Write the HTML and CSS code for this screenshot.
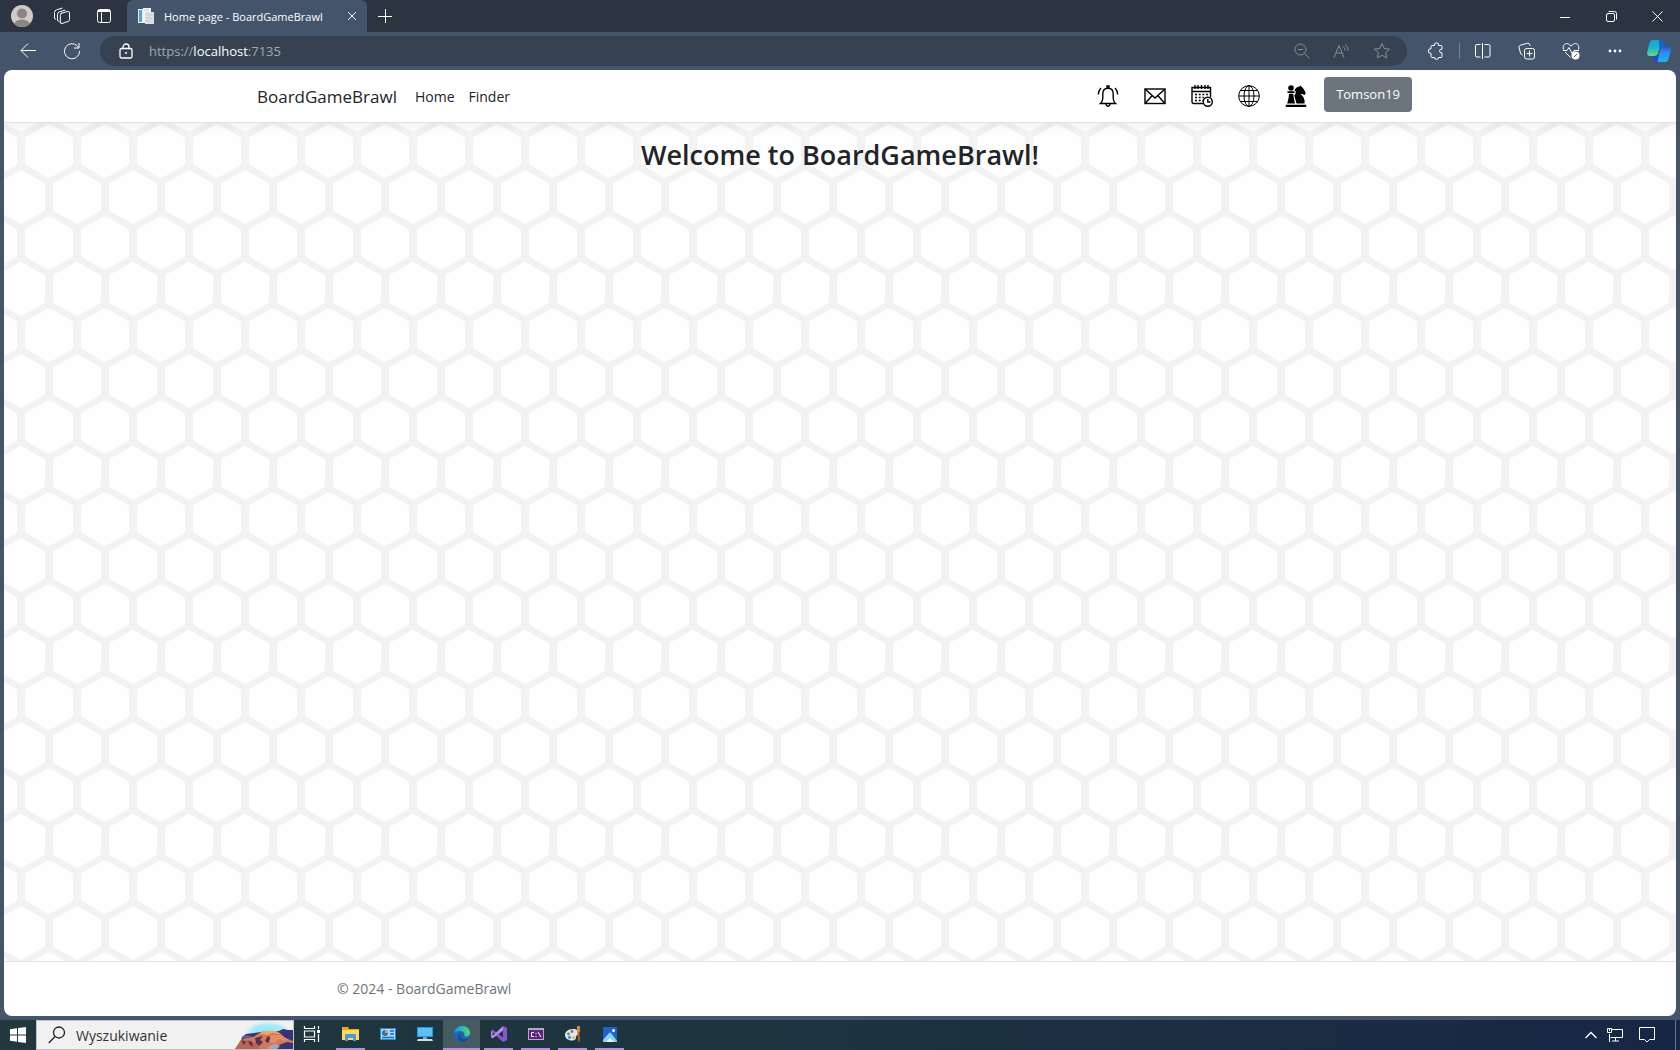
FILE: index.html
```html
<!DOCTYPE html>
<html lang="en">
<head>
<meta charset="utf-8">
<title>Home page - BoardGameBrawl</title>
<link rel="stylesheet" href="styles.css">
</head>
<body>
<div class="titlebar">
  <button class="tool w44" aria-label="Profile"><svg width="22" height="22" viewBox="0 0 22 22"><defs><clipPath id="av"><circle cx="11" cy="11" r="11"/></clipPath></defs><g clip-path="url(#av)"><rect width="22" height="22" fill="#cfccc8"/><circle cx="11" cy="8.500" r="5" fill="#8b8580"/><ellipse cx="11" cy="20" rx="8" ry="5.500" fill="#8b8580"/></g></svg></button>
  <button class="tool w36" aria-label="Workspaces"><svg class="line" width="18" height="18" viewBox="0 0 18 18"><path d="M7.500 6.500 14.500 4.500Q16.500 4.200 16.500 6V12.500Q16.500 14 15 14.500L9 16.500Q7.300 16.800 7.300 15V8.500Q7.300 6.800 9 6.200M4.500 13.500V7.500Q4.500 5.500 6.500 4.800L12.500 3M1.500 11.500V5.500Q1.500 3.500 3.500 2.800L9.500 1M3 12.500 1.500 11.500M6.500 14.700 4.500 13.500"/></svg></button>
  <button class="tool w47" aria-label="Tab actions"><svg class="line" width="16" height="16" viewBox="0 0 16 16"><rect x="1.500" y="1.500" width="13" height="13" rx="2"/><path d="M2 3h12" stroke-width="2"/><path d="M5.500 4.500v10"/></svg></button>
  <div class="tab">
    <svg width="16" height="16" viewBox="0 0 16 16"><path d="M0 1h8v14H0z" fill="#e8f0f4"/><path d="M1 2h3v12H1z" fill="#4fa3d8"/><path d="M5 0h8v13H5z" fill="#f4f4f2"/><path d="M7 4h9v12H7z" fill="#dde0e2"/><path d="M8 7h7M8 10h7M8 13h5" stroke="#c3cad0"/><path d="M6 2h5" stroke="#c9ced2"/></svg>
    <span class="tab-name">Home page - BoardGameBrawl</span>
    <button class="tool close" aria-label="Close tab"><svg class="line" width="10" height="10" viewBox="0 0 10 10"><path d="M1 1l8 8M9 1l-8 8"/></svg></button>
  </div>
  <button class="tool w36" aria-label="New tab"><svg class="line" width="14" height="14" viewBox="0 0 14 14"><path d="M7.500 0v14M0 7.500h14"/></svg></button>
  <div class="window-buttons">
    <button class="tool w46" aria-label="Minimize"><svg class="line" width="11" height="11" viewBox="0 0 11 11"><path d="M0 6.500h10"/></svg></button>
    <button class="tool w46" aria-label="Restore"><svg class="line" width="11" height="11" viewBox="0 0 11 11"><rect x=".5" y="2.500" width="8" height="8" rx="1.500"/><path d="M2.500 .5H8.500Q10.500 .5 10.500 2.500V8.500"/></svg></button>
    <button class="tool w46" aria-label="Close"><svg class="line" width="11" height="11" viewBox="0 0 11 11"><path d="M.5 .5l10 10M10.500 .5l-10 10"/></svg></button>
  </div>
</div>

<div class="toolbar">
  <button class="tool w44" aria-label="Back"><svg class="line" width="16" height="16" viewBox="0 0 16 16"><path d="M16 7.500H1M8 .5 1 7.500l7 7"/></svg></button>
  <button class="tool w44" aria-label="Refresh"><svg class="line" width="18" height="18" viewBox="0 0 18 18"><path d="M15.500 5.500A7.500 7.500 0 1 0 16.500 9M16 1v5h-5"/></svg></button>
  <div class="address">
    <button class="tool lock" aria-label="Site information"><svg class="line" width="14" height="16" viewBox="0 0 14 16"><rect x="1" y="5.500" width="12" height="9.500" rx="1.500" stroke-width="1.300"/><path d="M4 5.500V4a3 3 0 0 1 6 0v1.500" stroke-width="1.300"/><circle cx="7" cy="10" r="1" fill="#fff" stroke="none"/></svg></button>
    <div class="url" role="textbox" aria-label="Address" contenteditable="true" spellcheck="false">https://<b>localhost</b>:7135</div>
    <button class="tool dim w40" aria-label="Zoom"><svg class="line" width="16" height="16" viewBox="0 0 16 16"><circle cx="6.500" cy="6.500" r="5.500"/><path d="M10.500 10.500l5 5M4 6.500h5"/></svg></button>
    <button class="tool dim w40" aria-label="Read aloud"><svg class="line" width="18" height="16" viewBox="0 0 18 16"><path d="M1 14.500 6 2.500l5 12M3 10h6M10 3.500q2 1.300 2 4M12 1.500q3.500 2 3.200 6"/></svg></button>
    <button class="tool dim w40" aria-label="Add to favorites"><svg class="line" width="18" height="18" viewBox="0 0 18 18"><path d="M9 1.500l2.300 5 5.200.6-3.900 3.600 1.100 5.300L9 13.300 4.300 16l1.100-5.300L1.500 7.100l5.200-.6z"/></svg></button>
  </div>
  <button class="tool w44" aria-label="Extensions"><svg class="line" width="18" height="18" viewBox="0 0 18 18"><path d="M5 3.500h2.500Q7 .8 9.500 .8t2 2.700h2.500q1 0 1 1v2.700q-2.500-.3-2.500 1.800T15 10.800v3.700q0 1-1 1h-2.500q.4 1.800-2 1.800t-2-1.800H5q-1 0-1-1v-3.200Q1.300 11.500 1.300 9T4 6.800V4.500q0-1 1-1z"/></svg></button>
  <span class="divider"></span>
  <button class="tool w44" aria-label="Split screen"><svg class="line" width="18" height="16" viewBox="0 0 18 16"><path d="M6.500 1.500H3q-1.500 0-1.500 1.500v9.500q0 1.500 1.500 1.500h3.500M10.500 1.500H14.500q1.500 0 1.500 1.500v9.500q0 1.500-1.500 1.500h-4M8.500 0v16"/></svg></button>
  <button class="tool w44" aria-label="Collections"><svg class="line" width="18" height="18" viewBox="0 0 18 18"><rect x="6.500" y="6.500" width="10" height="10.500" rx="2"/><path d="M11.500 8.500v6M8.500 11.500h6M4.500 13Q3 12.500 2.500 11L1 5.500Q.7 3.700 2.500 3.200L9.500 1.200Q11.500 1 12 3v1"/></svg></button>
  <button class="tool w44" aria-label="Browser essentials"><svg class="line" width="18" height="18" viewBox="0 0 18 18"><path d="M1.500 7.500C0 3 4 .5 6.500 2L9 4l2.500-2c3-1.500 6.500 1 5 5.500M3 10l5.500 5.500M1 8.500h4l2-3 3 6 2-3h5"/><circle cx="13.500" cy="13.500" r="4" fill="#fff" stroke="none"/><path d="M12 15l3-3" stroke="#445469"/></svg></button>
  <button class="tool w44" aria-label="More"><svg width="14" height="4" viewBox="0 0 14 4" fill="#fff"><circle cx="2" cy="2" r="1.400"/><circle cx="7" cy="2" r="1.400"/><circle cx="12" cy="2" r="1.400"/></svg></button>
  <button class="tool copilot" aria-label="Copilot"><svg width="24" height="22" viewBox="0 0 24 22"><defs><linearGradient id="cp1" x1="0" y1="0" x2="0" y2="1"><stop offset="0" stop-color="#1b9be0"/><stop offset=".5" stop-color="#19b9c4"/><stop offset="1" stop-color="#63d98a"/></linearGradient><linearGradient id="cp2" x1="0" y1="0" x2="0" y2="1"><stop offset="0" stop-color="#2254c9"/><stop offset=".4" stop-color="#3088f0"/><stop offset="1" stop-color="#18b8f4"/></linearGradient></defs><path d="M6 0h7q2 0 1.500 2L11 13q-1 3-4 3H3Q-.5 16 .3 12L2.500 3Q3.300 0 6 0z" fill="url(#cp1)"/><path d="M12 0h2.500q2 0 2.700 3l.8 3H15q-2 0-2.700 2z" fill="#1565c4"/><path d="M15.500 6H21q3.500 0 2.800 4L21.500 19q-.8 3-3.500 3h-6q-2 0-1.500-2L13.500 9q.6-3 2-3z" fill="url(#cp2)"/><path d="M6 16h3q2 0 3-2l-1.700 8Q8 22 7.200 19z" fill="#2446d8"/></svg></button>
</div>

<div class="frame">
  <div class="page">
    <header class="site-header">
      <nav class="container nav">
        <a class="brand" href="#">BoardGameBrawl</a>
        <a class="nav-link" href="#">Home</a>
        <a class="nav-link" href="#">Finder</a>
        <div class="nav-icons">
          <a href="#" aria-label="Notifications"><svg class="ink" width="22" height="22" viewBox="0 0 22 22"><path d="M3.500 18.500h15q-2.300-2-2.300-5.500V9q0-5.700-5.200-5.700T5.800 9v4q0 3.500-2.300 5.500zM9 19q.3 2.200 2 2.200t2-2.200M10 3V1h2v2M4 3Q1.500 5.500 1.300 9.500M18 3q2.500 2.500 2.700 6.500"/></svg></a>
          <a href="#" aria-label="Messages"><svg class="ink" width="22" height="22" viewBox="0 0 22 22"><rect x="1" y="4" width="20" height="14.500"/><path d="M1 4l10 9 10-9M1 18.500 8 10.800M21 18.500 14 10.800"/></svg></a>
          <a href="#" aria-label="Calendar"><svg class="ink" width="22" height="22" viewBox="0 0 22 22"><path d="M12 18.500H3q-2 0-2-2V2.500h18.500V12M1 6.500h18.500"/><path d="M4 0v4M7 0v4M10.500 0v4M14 0v4M17 0v4"/><path d="M4 9.500h13M4 12.500h9M4 15.500h8" stroke-dasharray="2 1.700"/><circle cx="16.800" cy="16.800" r="4.500" fill="#fff"/><path d="M16.800 14v3h2.500"/></svg></a>
          <a href="#" aria-label="Language"><svg class="ink thin" width="22" height="22" viewBox="0 0 22 22"><circle cx="11" cy="11" r="10.300"/><ellipse cx="11" cy="11" rx="5" ry="10.300"/><path d="M11 .7v20.600M.7 11h20.600M2.500 5.500h17M2.500 16.500h17"/></svg></a>
          <a href="#" aria-label="Games"><svg width="22" height="22" viewBox="0 0 22 22"><circle cx="6" cy="3" r="2.800"/><path d="M2.500 6.300h7v1.700h-7zM4 8.800h4.300Q8.500 13 10 18.500H2.200Q4 13 4 8.800zM.8 19.800h20.400V22H.8z"/><path d="M9.500 5.500Q10.500 2 14.500 1.500L15.500 .2l1 1.600Q18.500 3 20.700 8l-1.200 2.200-1.500-1-2.700-.4Q20.500 13 19.500 18.500H11.500L9.300 10.500q1.700-2 1.500-4z"/></svg></a>
        </div>
        <button class="user">Tomson19</button>
      </nav>
    </header>
    <main class="content"><h1>Welcome to BoardGameBrawl!</h1></main>
    <footer class="site-footer"><div class="container copyright">© 2024 - BoardGameBrawl</div></footer>
  </div>
</div>

<div class="taskbar">
  <button class="tool start" aria-label="Start"><svg width="16" height="16" viewBox="0 0 16 16" fill="#fff"><path d="M0 2.300 7 1.200V7.500H0zM8 1 16 0v7.500H8zM0 8.500h7v6.300L0 13.700zM8 8.500h8V16l-8-1.100z"/></svg></button>
  <div class="search">
    <svg width="18" height="18" viewBox="0 0 18 18" fill="none" stroke="#222" stroke-width="1.300"><circle cx="11" cy="6.500" r="5.500"/><path d="M7 10.500.8 17"/></svg>
    <input type="text" aria-label="Wyszukiwanie" placeholder="Wyszukiwanie">
    <svg width="58" height="28" viewBox="0 0 58 28"><defs><radialGradient id="sky"><stop offset="0" stop-color="#7fe3fb"/><stop offset=".7" stop-color="#a9ebfb"/><stop offset="1" stop-color="#f1f1f1"/></radialGradient></defs><ellipse cx="33" cy="13" rx="24" ry="13" fill="url(#sky)"/><path d="M7 16l4-3 8-1 7-1 18-1 4-2 5 1 5 0v19H4z" fill="#383377"/><path d="M7 16l5-2 7 2-8 7z" fill="#6f5a8f"/><path d="M18 16l8-5 2-1h13l5 3 4 4 8 3v8H0l6-9z" fill="#cf7a5b"/><path d="M28 10h13l5 3-9-1-4 2-8-1z" fill="#f0a766"/><path d="M0 28l6-9 8 0 8 3 3 6z" fill="#b96759"/><path d="M6 19l5 2-2 3zM13 20l4 1 1 5-3-2zM20 17l8-2-3 4 3 2-4 4-3-3zM33 15l-3 5 3 2 4-4z" fill="#5a2f4c"/><path d="M36 14l-2 7 5 1 5-4 5 2 5-1-8-5z" fill="#e48e63"/><path d="M44 24l8-3 6 1v6H42z" fill="#383377"/><path d="M34 25l7-2 4 2-3 3h-9z" fill="#a9a3b8"/></svg>
  </div>
  <button class="tool task view" aria-label="Task view"><svg class="line" width="18" height="16" viewBox="0 0 18 16"><path d="M1.500 0v2.500h10V0M1.500 16v-2.500h10V16M1.500 5h10v6h-10zM15.500 0v3M15.500 8v8" stroke-width="1.200"/><path d="M14 4h3v3h-3z" fill="#fff" stroke="none"/></svg></button>
  <button class="tool task open" aria-label="File Explorer"><svg width="17" height="16" viewBox="0 0 17 16"><path d="M0 1h6l1 2h10v11H0z" fill="#e9a820"/><path d="M0 4h17v10H0z" fill="#ffd75e"/><path d="M3 15V9q0-1 1-1h9q1 0 1 1v6h-3v-3H6v3z" fill="#4a9bd8"/></svg></button>
  <button class="tool task" aria-label="Contacts"><svg width="16" height="16" viewBox="0 0 16 16"><path d="M0 2h16v12H0z" fill="#2c86cf"/><path d="M1 3h14v10H1z" fill="#a9dbf8"/><circle cx="5" cy="7" r="3" fill="#2572b8"/><path d="M5 4v3h3q0-3-3-3z" fill="#f0a33c"/><path d="M10 5h4M10 8h4M2 11.500h12" stroke="#1a6cb4" stroke-width="1.500"/></svg></button>
  <button class="tool task" aria-label="Computer"><svg width="16" height="16" viewBox="0 0 16 16"><path d="M0 1h16v10H0z" fill="#2396e4"/><path d="M1 2h14v8H1z" fill="#5cc0fa"/><path d="M6 11h4v2H6z" fill="#8aa2b2"/><path d="M1 13h14l1 2H0z" fill="#d4dde3"/></svg></button>
  <button class="tool task open active" aria-label="Edge"><svg width="16" height="16" viewBox="0 0 16 16"><defs><linearGradient id="ed" x1="0" y1=".3" x2="1" y2=".2"><stop offset="0" stop-color="#1492d8"/><stop offset=".6" stop-color="#2fc0b4"/><stop offset="1" stop-color="#65d968"/></linearGradient></defs><circle cx="8" cy="8" r="8" fill="#1769bd"/><path d="M0 8C0 3 4 0 8 0c5 0 8 3.500 8 7 0 3-3 4-5.500 3.500-1-.3 0-1 0-2C10.500 6 8 4.500 5.500 5 2.500 5.500.5 7 0 8z" fill="url(#ed)"/><path d="M6 8q0 5 5 5 2.500 0 4-1.500-2 4-6 4.500Q3 14.500 4 9.500 5 7 6.700 6.500 6 7 6 8z" fill="#164a94"/><path d="M7 8q.3-1.500 1.800-1.200Q10.500 7.500 10 9q-.5 1.500 2 2-4 .8-5-3z" fill="#465a62"/></svg></button>
  <button class="tool task open" aria-label="Visual Studio"><svg width="16" height="16" viewBox="0 0 16 16"><path d="M12 0l4 2v12l-4 2L0 5l1.500-1.500L12 11.500z" fill="#8a55cf"/><path d="M12 0v4.500L1.500 12.500 0 11 0 5l1.500 1v4z" fill="#b98cf0"/></svg></button>
  <button class="tool task open" aria-label="Command line"><svg width="16" height="16" viewBox="0 0 16 16"><path d="M0 2h16v12H0z" fill="#b9a8c6"/><path d="M1 4h14v9H1z" fill="#5c2583"/><path d="M6 6.500H3.500v4H6M8 7v1M8 10v1M10 6l3 5" fill="none" stroke="#fff"/></svg></button>
  <button class="tool task open" aria-label="Paint"><svg width="16" height="16" viewBox="0 0 16 16"><path d="M8 3c4 0 6 2 5 5-.5 2-2 1-2 3s-1 3.500-4 3.500C3 14.500 0 12 0 9s3-6 8-6z" fill="#dce9f0"/><circle cx="3.500" cy="8" r="1.400" fill="#4c9e3e"/><circle cx="7" cy="5.500" r="1.400" fill="#e54b3c"/><circle cx="4.500" cy="11.500" r="1.400" fill="#2b83d4"/><circle cx="8.500" cy="11.500" r="1.400" fill="#edb72f"/><path d="M12 0h3v6h-3z" fill="#d98837"/><path d="M12.500 6h2l.5 8q-1.500 4-2 0z" fill="#b35e1d"/></svg></button>
  <button class="tool task open" aria-label="Photos"><svg width="14" height="15" viewBox="0 0 14 15"><path d="M0 0h14v15H0z" fill="#1e63c8"/><path d="M0 13 6 6q1-1 2 0l6 8v1H0z" fill="#8cd0fa"/><path d="M3 15l4-4 4 4z" fill="#e8f6ff"/><circle cx="10.500" cy="3.500" r="1.500" fill="#eaf5ff"/></svg></button>
  <div class="tray">
    <button class="tool" aria-label="Show hidden icons"><svg class="line" width="12" height="8" viewBox="0 0 12 8"><path d="M.5 7 6 1.500 11.500 7" stroke-width="1.300"/></svg></button>
    <button class="tool" aria-label="Network"><svg class="line" width="16" height="14" viewBox="0 0 16 14"><path d="M5 1.500h10.500v8H3.500M8.500 10v3M5 13h7M2.500 6v8M.5 .5h4v4h-4zM2.500 1v2"/></svg></button>
    <button class="tool" aria-label="Notifications"><svg class="line" width="16" height="16" viewBox="0 0 16 16"><path d="M.5 .5h15v12h-5L8 15l-2.500-2.500h-5z"/></svg></button>
  </div>
</div>
</body>
</html>
```
FILE: styles.css
```css
* { box-sizing: border-box; }

body {
  margin: 0;
  min-height: 100vh;
  display: flex;
  flex-direction: column;
  background: #44546a;
  font-family: "Open Sans", "Noto Sans", sans-serif;
  color: #212529;
}

button { font: inherit; border: 0; cursor: pointer; }
a { color: inherit; text-decoration: none; }
svg { display: block; flex: none; }

.line { fill: none; stroke: #fff; stroke-width: 1; }
.ink { fill: none; stroke: #000; stroke-width: 1.4; }
.thin { stroke-width: 1; }

.tool {
  display: flex;
  align-items: center;
  justify-content: center;
  padding: 0;
  background: none;
}
.w36 { width: 36px; }
.w40 { width: 40px; }
.w44 { width: 44px; }
.w46 { width: 46px; }
.w47 { width: 47px; }
.dim .line { stroke: #8b8f94; }

/* Browser chrome */
.titlebar {
  display: flex;
  height: 32px;
  background: #2b3440;
}
.tab {
  display: flex;
  align-items: center;
  gap: 10px;
  width: 240px;
  padding: 0 10px 0 11px;
  background: #44546a;
  border-radius: 6px 6px 0 0;
  color: #fff;
  font-size: 11px;
}
.tab-name { flex: 1; white-space: nowrap; }
.tab .close { width: 10px; }
.window-buttons { display: flex; margin-left: auto; }

.toolbar {
  display: flex;
  align-items: center;
  height: 38px;
  padding-left: 6px;
}
.address {
  flex: 1;
  display: flex;
  align-items: center;
  height: 30px;
  margin: 0 7px 0 6px;
  padding: 0 5px 0 16px;
  border-radius: 15px;
  background: #364252;
}
.lock { width: 20px; }
.url {
  flex: 1;
  padding-left: 13px;
  color: #a3a8ae;
  font-size: 13px;
  line-height: 20px;
  outline: 0;
}
.url b { font-weight: 400; color: #fff; }
.divider {
  width: 1px;
  height: 16px;
  margin: 0 1px;
  background: #7a8594;
}
.copilot { width: 43px; }

/* Web page */
.frame {
  flex: 1;
  display: flex;
  padding: 0 4px 4px;
}
.page {
  flex: 1;
  display: flex;
  flex-direction: column;
  overflow: hidden;
  border-radius: 8px;
  background: #fff;
}
.container {
  width: 100%;
  max-width: 1188px;
  margin: 0 auto;
  padding: 0 22px 0 11px;
}
.site-header {
  position: relative;
  border-bottom: 1px solid #dee2e6;
  box-shadow: 0 4px 10px rgba(0, 0, 0, .05);
}
.nav {
  display: flex;
  align-items: center;
  height: 52px;
  font-size: 14px;
}
.brand { margin-right: 11px; font-size: 17px; }
.nav-link { padding: 0 7px; }
.nav-icons {
  display: flex;
  gap: 25px;
  margin-left: auto;
  margin-right: 17px;
}
.user {
  height: 35px;
  padding: 0 12px;
  margin-bottom: 4px;
  border-radius: 4px;
  background: #6c757d;
  color: #fff;
  font-size: 13px;
}
.content {
  flex: 1;
  padding-top: 14px;
  background: #fff url("data:image/svg+xml,%3Csvg xmlns='http://www.w3.org/2000/svg' width='56' height='92'%3E%3Crect width='56' height='92' fill='%23f2f2f2'/%3E%3Cg fill='%23fefefe' stroke='%23fefefe' stroke-width='6' stroke-linejoin='round'%3E%3Cpath d='M45 4L66 16V40L45 52L24 40V16Z'/%3E%3Cpath d='M-11 4L10 16V40L-11 52L-32 40V16Z'/%3E%3Cpath d='M17 50L38 62V86L17 98L-4 86V62Z'/%3E%3Cpath d='M73 50L94 62V86L73 98L52 86V62Z'/%3E%3Cpath d='M17 -42L38 -30V-6L17 6L-4 -6V-30Z'/%3E%3Cpath d='M73 -42L94 -30V-6L73 6L52 -6V-30Z'/%3E%3C/g%3E%3C/svg%3E");
}
h1 {
  margin: 0;
  text-align: center;
  font-size: 27px;
  font-weight: 600;
  line-height: 36px;
}
.site-footer { border-top: 1px solid #dee2e6; }
.copyright {
  padding-left: 91px;
  color: #6c757d;
  font-size: 14px;
  line-height: 54px;
}

/* Taskbar */
.taskbar {
  display: flex;
  height: 30px;
  background: linear-gradient(90deg, #20383e, #1d333f 50%, #182645);
}
.start { width: 36px; }
.search {
  display: flex;
  align-items: center;
  width: 258px;
  padding-left: 11px;
  border: 1px solid #c4c4c4;
  background: #f1f1f1;
}
.search input {
  flex: 1;
  min-width: 0;
  margin-left: 10px;
  padding: 0;
  border: 0;
  outline: 0;
  background: none;
  font: 14px "Open Sans", "Noto Sans", sans-serif;
}
.search input::placeholder { color: #333; opacity: 1; }
.task { width: 37px; border-bottom: 2px solid transparent; }
.view { width: 38px; padding-right: 2px; }
.open {
  width: 29px;
  margin: 0 4px;
  border-bottom-color: #b48fe0;
}
.active {
  width: 37px;
  margin: 0;
  background: #465a62;
}
.tray {
  display: flex;
  margin-left: auto;
  margin-right: 4px;
  padding-right: 12px;
  border-right: 1px solid #6b7688;
}
.tray .tool { width: 32px; }
.tray .tool:first-child { width: 16px; }
```
